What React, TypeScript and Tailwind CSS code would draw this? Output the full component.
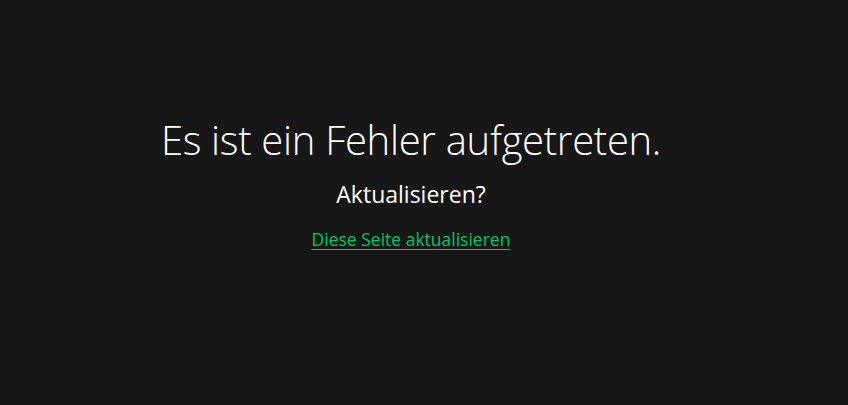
export default function App() {
  return (
    <div className="h-[405px] w-full bg-[#171717] text-white" style={{ fontFamily: '"Open Sans", "Noto Sans", sans-serif' }}>
      <div className="flex flex-col items-center pt-[114px] pr-[26px]">
        <h1 className="text-[40px] font-light leading-[52px] tracking-[-0.3px]">Es ist ein Fehler aufgetreten.</h1>
        <p className="mt-[14px] text-[23px] leading-[28px]">Aktualisieren?</p>
        <a href="#" className="mt-[20px] text-[17.5px] leading-[22px] text-[#00c862] underline underline-offset-[3px]">
          Diese Seite aktualisieren
        </a>
      </div>
    </div>
  );
}
